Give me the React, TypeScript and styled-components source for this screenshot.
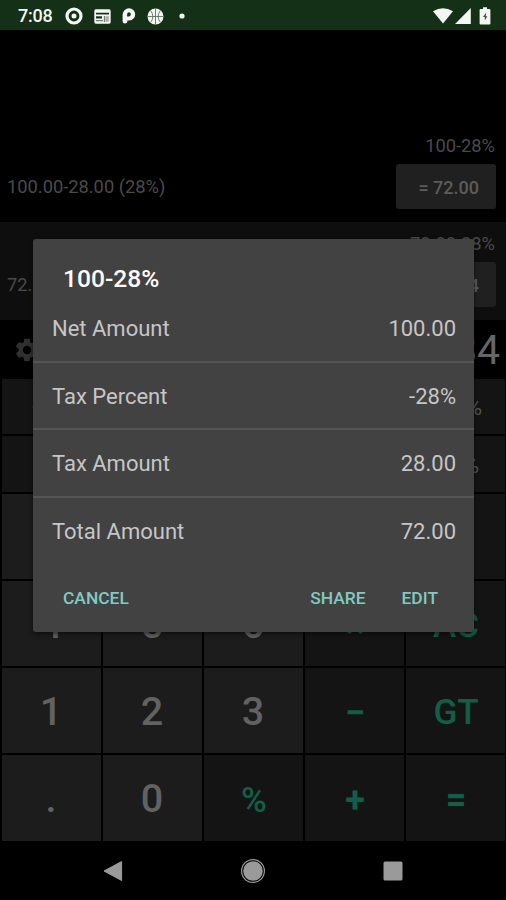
import React from "react";
import styled, { createGlobalStyle } from "styled-components";

const GlobalStyle = createGlobalStyle`
  * { box-sizing: border-box; }
  body { margin: 0; background: #000; font-family: Roboto, "Liberation Sans", sans-serif; }
  button { font-family: inherit; border: 0; padding: 0; background: none; }
`;

const Screen = styled.div`
  position: relative;
  display: flex;
  flex-direction: column;
  width: 506px;
  height: 900px;
  overflow: hidden;
  background: #000;
`;

const StatusBar = styled.header`
  display: flex;
  align-items: center;
  justify-content: space-between;
  height: 30px;
  padding: 2px 15px 0 18px;
  background: #143016;
  color: #f4f6f4;
`;

const Clock = styled.span`
  width: 47px;
  font-size: 18px;
  font-weight: 500;
  line-height: 28px;
  letter-spacing: -0.2px;
`;

const StatusGroup = styled.div<{ $gap: number }>`
  display: flex;
  align-items: center;
  gap: ${(p) => p.$gap}px;
  svg { display: block; }
`;

const History = styled.section`
  height: 290px;
  padding-top: 94px;
`;

const HistoryRow = styled.article<{ $shaded?: boolean }>`
  display: flex;
  flex-direction: column;
  height: 98px;
  padding: 9px 10px 0 7px;
  background: ${(p) => (p.$shaded ? "#0e0e0e" : "#000")};
  color: #4a4a4a;
  font-size: 18.3px;
`;

const Expression = styled.div`
  height: 31px;
  padding-right: 1px;
  line-height: 26px;
  text-align: right;
`;

const Breakdown = styled.div`
  display: flex;
  align-items: center;
  justify-content: space-between;
`;

const ResultButton = styled.button`
  width: 100px;
  height: 45px;
  padding: 1px 17px 0 0;
  border-radius: 3px;
  background: #202020;
  color: #5c5c5c;
  font-size: 18px;
  font-weight: 500;
  text-align: right;
`;

const Display = styled.section`
  display: flex;
  align-items: center;
  justify-content: space-between;
  height: 59px;
  padding: 1px 6px 0 13px;
  color: #666;
  font-size: 41px;
`;

const GearButton = styled.button`
  display: flex;
  color: #303030;
`;

const Keypad = styled.section`
  display: grid;
  grid-template-columns: repeat(5, 1fr);
  grid-template-rows: 55px 56px 85px 85px 85px 86px;
  gap: 2px;
  height: 462px;
  padding-left: 2px;
  padding-right: 1px;
`;

type Tone = "digit" | "action" | "symbol" | "tax";

const keyTones: Record<
  Tone,
  { fill: string; text: string; size: number; weight: number; padding: string }
> = {
  digit: { fill: "#1c1c1c", text: "#626262", size: 39.5, weight: 500, padding: "1px 1px 0 0" },
  action: { fill: "#141414", text: "#105f47", size: 35, weight: 500, padding: "4px 0 0 1px" },
  symbol: { fill: "#141414", text: "#105f47", size: 36, weight: 700, padding: "4px 0 0 1px" },
  tax: { fill: "#141414", text: "#555", size: 21.5, weight: 400, padding: "2px 0 0 1px" },
};

const Key = styled.button<{ $tone: Tone }>`
  display: flex;
  align-items: center;
  justify-content: center;
  padding: ${(p) => keyTones[p.$tone].padding};
  background: ${(p) => keyTones[p.$tone].fill};
  color: ${(p) => keyTones[p.$tone].text};
  font-size: ${(p) => keyTones[p.$tone].size}px;
  font-weight: ${(p) => keyTones[p.$tone].weight};
`;

const NavBar = styled.nav`
  display: flex;
  align-items: center;
  justify-content: center;
  gap: 117px;
  height: 59px;
  svg { display: block; }
`;

const Dialog = styled.div`
  position: absolute;
  left: 33px;
  top: 239px;
  width: 441px;
  height: 393px;
  display: flex;
  flex-direction: column;
  border-radius: 3px;
  background: #424242;
  box-shadow: 0 2px 5px rgba(0, 0, 0, 0.5);
`;

const DialogTitle = styled.h1`
  height: 56px;
  margin: 0;
  padding: 24px 30px 0;
  color: #fff;
  font-size: 24.6px;
  font-weight: 500;
  line-height: 32px;
`;

const DetailList = styled.dl`
  margin: 0;
`;

const DetailRow = styled.div`
  display: flex;
  justify-content: space-between;
  align-items: center;
  height: 67.5px;
  padding: 2px 18px 0 19px;
  border-bottom: 2px solid #545454;
  color: #c6c6c6;
  font-size: 22px;
  &:last-child { border-bottom-color: transparent; }
  dt, dd { margin: 0; }
`;

const DialogActions = styled.footer`
  display: flex;
  align-items: center;
  gap: 36px;
  margin-top: 15px;
  padding: 0 36px 0 30px;
`;

const TextButton = styled.button<{ $start?: boolean }>`
  margin-right: ${(p) => (p.$start ? "auto" : "0")};
  color: #80cbc1;
  font-size: 17.4px;
  font-weight: 500;
  line-height: 36px;
`;

const history = [
  { expression: "100-28%", breakdown: "100.00-28.00 (28%)", result: "= 72.00" },
  { expression: "72.00-28%", breakdown: "72.00-20.16 (28%)", result: "= 51.84" },
];

const keys: [string, Tone][] = [
  ["+5%", "tax"], ["+12%", "tax"], ["+15%", "tax"], ["+18%", "tax"], ["+28%", "tax"],
  ["-5%", "tax"], ["-12%", "tax"], ["-15%", "tax"], ["-18%", "tax"], ["-28%", "tax"],
  ["7", "digit"], ["8", "digit"], ["9", "digit"], ["÷", "symbol"], ["C", "action"],
  ["4", "digit"], ["5", "digit"], ["6", "digit"], ["×", "symbol"], ["AC", "action"],
  ["1", "digit"], ["2", "digit"], ["3", "digit"], ["−", "symbol"], ["GT", "action"],
  [".", "digit"], ["0", "digit"], ["%", "action"], ["+", "symbol"], ["=", "symbol"],
];

const details = [
  ["Net Amount", "100.00"],
  ["Tax Percent", "-28%"],
  ["Tax Amount", "28.00"],
  ["Total Amount", "72.00"],
];

const TargetIcon = () => (
  <svg width="18" height="18" viewBox="0 0 18 18">
    <circle cx="9" cy="9" r="7" fill="none" stroke="currentColor" strokeWidth="3.2" />
    <circle cx="9" cy="9" r="2.5" fill="currentColor" />
  </svg>
);

const NewsIcon = () => (
  <svg width="17" height="15" viewBox="0 0 17 15">
    <rect x="0.3" y="0.3" width="16.4" height="14.4" rx="1.6" fill="currentColor" />
    <path d="M2 4.6h13" stroke="#143016" strokeWidth="1.7" />
    <path d="M2 7.3h6v2.2H2z" fill="#143016" />
    <path d="M2 11.7h7M10.5 7v6" stroke="#6f8370" strokeWidth="1.3" />
    <path d="M11.5 7.2h3.3v5.5h-3.3z" fill="#a8b4a9" />
  </svg>
);

const ParkingIcon = () => (
  <svg width="14" height="16" viewBox="0 0 14 16">
    <path
      fill="currentColor"
      fillRule="evenodd"
      d="M7 0.3A6 6 0 0 1 7.3 12.4H5.4V13.2A2.4 2.4 0 0 1 0.6 13.2V6.6A6.4 6.4 0 0 1 7 .3ZM7.2 4.3A2.1 2.1 0 0 0 5.1 6.4V8.4H7.2A2.1 2.1 0 0 0 7.2 4.3Z"
    />
  </svg>
);

const BasketballIcon = () => (
  <svg width="17" height="17" viewBox="0 0 17 17">
    <circle cx="8.5" cy="8.5" r="8" fill="currentColor" />
    <path
      d="M8.5.5v16M.5 8.5h16M3.5 2.5c3 3.5 3 8.5 0 12M13.5 2.5c-3 3.5-3 8.5 0 12"
      fill="none"
      stroke="#5d735e"
      strokeWidth="0.9"
    />
  </svg>
);

const DotIcon = () => (
  <svg width="14" height="6" viewBox="0 0 14 6">
    <circle cx="7" cy="3" r="2.6" fill="currentColor" />
  </svg>
);

const WifiIcon = () => (
  <svg width="20" height="16" viewBox="0 0 20 16">
    <path d="M0 3.2Q10-2.6 20 3.2L10 15.6Z" fill="currentColor" />
  </svg>
);

const SignalIcon = () => (
  <svg width="16" height="16" viewBox="0 0 16 16">
    <path d="M15.8 0V16H0Z" fill="currentColor" />
  </svg>
);

const BatteryIcon = () => (
  <svg width="12" height="18" viewBox="0 0 12 18">
    <path d="M4 .3h4v1.8h2.4q1 0 1 1v13.4q0 1-1 1H1.6q-1 0-1-1V3.1q0-1 1-1H4Z" fill="currentColor" />
    <path d="M7.2 5.4L4 10H5.8V13.6L8.4 9.2H6.8Z" fill="#3c543e" />
  </svg>
);

const GearIcon = () => (
  <svg width="28" height="28" viewBox="0 0 24 24">
    <path
      fill="currentColor"
      d="M19.14 12.94c.04-.3.06-.61.06-.94 0-.32-.02-.64-.07-.94l2.03-1.58c.18-.14.23-.41.12-.61l-1.92-3.32c-.12-.22-.37-.29-.59-.22l-2.39.96c-.5-.38-1.03-.7-1.62-.94L14.4 2.81c-.04-.24-.24-.41-.48-.41h-3.84c-.24 0-.43.17-.47.41L9.25 5.35c-.59.24-1.13.57-1.62.94L5.24 5.33c-.22-.08-.47 0-.59.22L2.74 8.87c-.12.21-.08.47.12.61l2.03 1.58c-.05.3-.09.63-.09.94s.02.64.07.94l-2.03 1.58c-.18.14-.23.41-.12.61l1.92 3.32c.12.22.37.29.59.22l2.39-.96c.5.38 1.03.7 1.62.94l.36 2.54c.05.24.24.41.48.41h3.84c.24 0 .44-.17.47-.41l.36-2.54c.59-.24 1.13-.56 1.62-.94l2.39.96c.22.08.47 0 .59-.22l1.92-3.32c.12-.22.07-.47-.12-.61ZM12 15.6A3.6 3.6 0 1 1 12 8.4a3.6 3.6 0 0 1 0 7.2Z"
    />
  </svg>
);

export default function App() {
  return (
    <>
      <GlobalStyle />
      <Screen>
        <StatusBar>
          <StatusGroup $gap={0}>
            <Clock>7:08</Clock>
            <StatusGroup $gap={11}>
              <TargetIcon />
              <NewsIcon />
              <ParkingIcon />
              <BasketballIcon />
              <DotIcon />
            </StatusGroup>
          </StatusGroup>
          <StatusGroup $gap={2}>
            <WifiIcon />
            <StatusGroup $gap={8}>
              <SignalIcon />
              <BatteryIcon />
            </StatusGroup>
          </StatusGroup>
        </StatusBar>
        <History>
          {history.map((entry, i) => (
            <HistoryRow key={entry.expression} $shaded={i % 2 === 1}>
              <Expression>{entry.expression}</Expression>
              <Breakdown>
                <span>{entry.breakdown}</span>
                <ResultButton>{entry.result}</ResultButton>
              </Breakdown>
            </HistoryRow>
          ))}
        </History>
        <Display>
          <GearButton aria-label="Settings">
            <GearIcon />
          </GearButton>
          <span>51.84</span>
        </Display>
        <Keypad>
          {keys.map(([label, tone]) => (
            <Key key={label} $tone={tone}>
              {label}
            </Key>
          ))}
        </Keypad>
        <NavBar>
          <svg width="20" height="22" viewBox="0 0 20 22">
            <path d="M18.6 1.5V20.5L1 11Z" fill="#9a9a9a" stroke="#9a9a9a" strokeLinejoin="round" />
          </svg>
          <svg width="26" height="26" viewBox="0 0 26 26">
            <circle cx="13" cy="13" r="11.4" fill="none" stroke="#9a9a9a" strokeWidth="1.2" />
            <circle cx="13" cy="13" r="9.8" fill="#9a9a9a" />
          </svg>
          <svg width="20" height="20" viewBox="0 0 20 20">
            <rect x="0.5" y="0.5" width="19" height="19" rx="1.5" fill="#9a9a9a" />
          </svg>
        </NavBar>
        <Dialog role="dialog">
          <DialogTitle>100-28%</DialogTitle>
          <DetailList>
            {details.map(([label, value]) => (
              <DetailRow key={label}>
                <dt>{label}</dt>
                <dd>{value}</dd>
              </DetailRow>
            ))}
          </DetailList>
          <DialogActions>
            <TextButton $start>CANCEL</TextButton>
            <TextButton>SHARE</TextButton>
            <TextButton>EDIT</TextButton>
          </DialogActions>
        </Dialog>
      </Screen>
    </>
  );
}
